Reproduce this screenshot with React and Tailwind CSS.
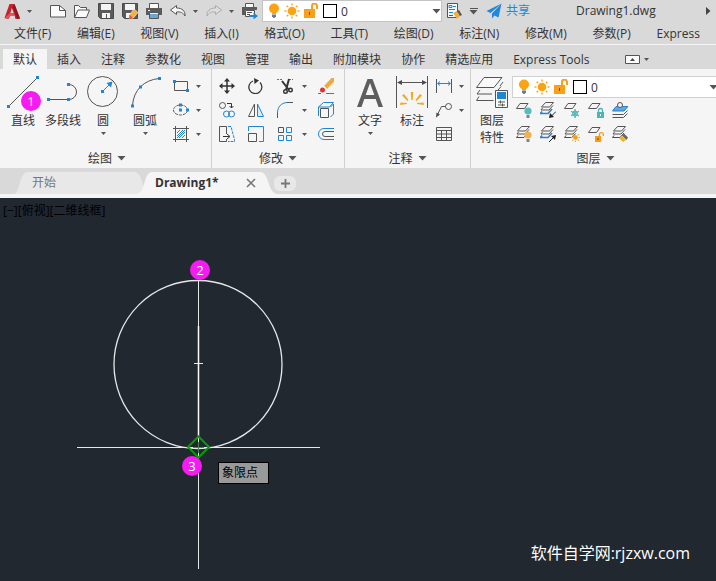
import React from "react";

const Svg = ({ w = 16, h = 16, children, className = "" }) => (
  <svg
    width={w}
    height={h}
    viewBox={`0 0 ${w} ${h}`}
    fill="none"
    stroke="#555"
    strokeWidth="1"
    className={`block shrink-0 ${className}`}
    aria-hidden="true"
  >
    {children}
  </svg>
);

const Caret = ({ big }) =>
  big ? (
    <Svg w={9} h={5}>
      <path d="M0.500 0h8L4.500 4.500z" fill="#555" stroke="none" />
    </Svg>
  ) : (
    <Svg w={5} h={3}>
      <path d="M0 0h5L2.500 3z" fill="#555" stroke="none" />
    </Svg>
  );

const Dot = ({ x, y }) => (
  <rect x={x - 1.5} y={y - 1.5} width="3" height="3" fill="#1f86d1" stroke="none" />
);

/* ---------- status glyphs ---------- */
const Bulb = () => (
  <Svg w={12} h={16}>
    <circle cx="6" cy="5.500" r="5" fill="#fca311" stroke="none" />
    <path d="M4 9h4v2H4z" fill="#fca311" stroke="none" />
    <path d="M4 11.500h4v2L6.500 15h-1L4 13.500z" fill="#6d7b88" stroke="none" />
  </Svg>
);
const rays = [0, 45, 90, 135, 180, 225, 270, 315];
const Sun = () => (
  <Svg>
    <circle cx="8" cy="8" r="4.300" fill="#fca311" stroke="none" />
    {rays.map((a) => (
      <path key={a} d="M8 0.500v2" stroke="#fca311" strokeWidth="1.400" transform={`rotate(${a} 8 8)`} />
    ))}
  </Svg>
);
const Unlock = () => (
  <Svg w={15}>
    <path d="M0 6h11v9H0z" fill="#f9a01b" stroke="none" />
    <path d="M8 7V3a2.500 2.500 0 0 1 5 0v3" stroke="#f9a01b" strokeWidth="2" />
    <path d="M5.500 9v3" stroke="#7a4d00" />
  </Svg>
);
const Swatch = () => <span className="block h-[14px] w-[14px] shrink-0 border border-black bg-white" />;

/* ---------- quick access icons ---------- */
const NewFile = () => (
  <Svg>
    <path d="M0.500 2.500h9l6 5v6.500H0.500z" fill="#fafafa" />
    <path d="M9.500 2.500v5h6" />
  </Svg>
);
const OpenFile = () => (
  <Svg>
    <path d="M0.500 14V2.500h4l2 2h6v2.500" fill="#fafafa" />
    <path d="M0.500 14.500l3.500-7.500h11.500l-3 7.500z" fill="#fafafa" />
  </Svg>
);
const Save = ({ edit }) => (
  <Svg>
    <path d="M0.500 0.500h15v15H2.500l-2-2z" fill="#5b5b5b" stroke="#4a4a4a" />
    <path d="M3 1h10v6H3z" fill="#f4f4f4" stroke="none" />
    <path d="M4 10h8v5H4z" fill="#f4f4f4" stroke="none" />
    <path d="M8.500 11v4" />
    {edit && (
      <>
        <path d="M7 12.500l5-6.500 4 3.500-5 6-3.500 0.500z" fill="#f5b042" stroke="#f4f4f4" strokeWidth="0.600" />
        <path d="M7.500 11.500l3.500 3.500-1 1H7z" fill="#e2574c" stroke="none" />
      </>
    )}
  </Svg>
);
const Printer = () => (
  <Svg>
    <path d="M3.500 5V0.500h9V5" fill="#fafafa" />
    <path d="M0 5h16v7H0z" fill="#5b5b5b" stroke="none" />
    <path d="M2 7.500h2" stroke="#fff" />
    <path d="M3.500 9.500h9v6h-9z" fill="#e6f1fa" />
    <path d="M4 11h8v4H4z" fill="#69a7d8" stroke="none" />
  </Svg>
);
const Undo = () => (
  <Svg>
    <path d="M6.500 2.500L0.500 7l6 4.500V9c4 -0.500 6.500 0.500 8.500 4 0.500-5-3-8-8.500-8z" fill="#f7f7f7" />
  </Svg>
);
const Redo = () => (
  <Svg>
    <path d="M9.500 2.500L15.500 7l-6 4.500V9C5.500 8.500 3 9.500 1 13 0.500 8 4 5 9.500 5z" fill="#dedede" stroke="#aaa" />
  </Svg>
);
const Plot = () => (
  <Svg>
    <path d="M3.500 5V0.500h8V5" fill="#fafafa" />
    <path d="M0 4h15v3H0zM0 7h3v5H0z" fill="#5b5b5b" stroke="none" />
    <path d="M3.500 7.500h9v6h-9z" fill="#fafafa" />
    <path d="M5 9.500h5M5 11.500h3" />
    <path d="M7 12h4.500V9.500l4.500 3.500-4.500 3.500V14H7z" fill="#1f86d1" stroke="none" />
  </Svg>
);
const MatchLayer = () => (
  <Svg>
    <path d="M1.500 0.500h10v14h-10z" fill="#f7f7f7" />
    <path d="M3 2.500h3v2H3zM7 3.500h3M3 6.500h6M3 9.500h4" stroke="#1f86d1" />
    <path d="M3 12.500h4" />
    <path d="M7 10l4-2 3 5-3 3z" fill="#f2ae3a" stroke="none" />
    <path d="M11 8l2-1 3 5-2 1z" fill="#555" stroke="none" />
  </Svg>
);
const Plane = () => (
  <Svg>
    <path d="M15.500 0.500L0.500 8l4 2zM15.500 0.500L6 10.500V15.500l2.500-3 4 2z" fill="#1c88e0" stroke="none" />
  </Svg>
);
const Logo = () => (
  <Svg w={17} h={17}>
    <path d="M5.500 1h5L16 15.500l-4.500 0.500-1-3.500H6l-1.500 3.500L0.500 15z" fill="#c4232d" stroke="none" />
    <path d="M10.500 1L16 15.500l-3 0.500L8.500 4z" fill="#8f1820" stroke="none" />
    <path d="M7.800 5L9.800 10H6.300z" fill="#d9d9d9" stroke="none" />
    <path d="M0.500 15L6 10h4l0.800 2.500H6.500L4.500 16z" fill="#e0525a" stroke="none" />
  </Svg>
);

/* ---------- large ribbon icons ---------- */
const LineIcon = () => (
  <Svg w={32} h={32}>
    <path d="M1.500 30.500L30.500 1.500" />
    <Dot x={1.5} y={30.5} />
    <Dot x={30.5} y={1.5} />
  </Svg>
);
const PolyIcon = () => (
  <Svg w={32} h={32}>
    <path d="M2 23.500h20a7.500 7.500 0 0 0 0-15" />
    <Dot x={1.5} y={23.5} />
    <Dot x={21.5} y={23.5} />
    <Dot x={21.5} y={8.5} />
  </Svg>
);
const CircleIcon = () => (
  <Svg w={32} h={32}>
    <circle cx="15.500" cy="15.500" r="15" />
    <path d="M15.500 15.500l7-7" stroke="#1f86d1" />
    <path d="M25.500 5.500l-1.500 6-4.500-4.500z" fill="#1f86d1" stroke="none" />
    <Dot x={15.5} y={15.5} />
  </Svg>
);
const ArcIcon = () => (
  <Svg w={32} h={32}>
    <path d="M3.500 29.500C4.500 14 15 4 30 2.500" />
    <Dot x={3.5} y={30} />
    <Dot x={11.5} y={11} />
    <Dot x={30.5} y={2.5} />
  </Svg>
);
const TextIcon = () => (
  <Svg w={32} h={32}>
    <path d="M3 31L13.500 3h5L29 31h-4.500l-2.800-8H10.300L7.500 31zM11.700 19h8.600L16 7z" fill="#5e5e5e" fillRule="evenodd" stroke="none" />
  </Svg>
);
const DimIcon = () => (
  <Svg w={32} h={32}>
    <path d="M0.500 0v32M31.500 0v32M2 6.500h28" />
    <path d="M1 6.500l5-2.500v5zM31 6.500l-5-2.500v5z" fill="#4a4a4a" stroke="none" />
    <path d="M14.700 16h2.600l-0.600 8h-1.400zM6 19.500l2-1.500 4.500 6-1 1zM26 19.500l-2-1.500-4.500 6 1 1zM4 29l0.500-2.500 6.500 0.500v1zM28 29l-0.500-2.500-6.500 0.500v1z" fill="#f5a81c" stroke="none" />
  </Svg>
);
const LayerPropIcon = () => (
  <Svg w={32} h={32}>
    <path d="M8 1.500h18L18 11.500H0.500z" fill="#fafafa" />
    <path d="M4 14l-3 4h15M25 10.500l-5 6M3 20.500L0.500 24.500h17M27 6l-3 4" />
    <path d="M19.500 14.500h12v17h-12z" fill="#fafafa" />
    <path d="M21 16h9v7h-9z" fill="#1f86d1" stroke="none" />
    <path d="M22 26h7M22 29h7M24.500 24.500v3M26.500 27.500v3" />
  </Svg>
);

/* ---------- small ribbon icons ---------- */
const RectIcon = () => (
  <Svg>
    <path d="M1.500 3.500h13v9h-13z" />
    <Dot x={1.5} y={3.5} />
    <Dot x={14.5} y={12.5} />
  </Svg>
);
const EllipseIcon = () => (
  <Svg>
    <ellipse cx="7.500" cy="8" rx="7" ry="5" strokeDasharray="3 1" />
    <Dot x={7.5} y={3} />
    <Dot x={7.5} y={8} />
    <Dot x={14.5} y={8} />
  </Svg>
);
const HatchIcon = () => (
  <Svg>
    <path d="M2.500 0v16M13.500 0v16M0 2.500h16M0 13.500h16" />
    <path d="M4 7l3-3M4 10l6-6M4 12l8-8M6 12l6-6M9 12l3-3" stroke="#1f86d1" />
  </Svg>
);
const MoveIcon = () => (
  <Svg>
    <path d="M8 2v12M2 8h12" stroke="#333" strokeWidth="1.500" />
    <path d="M8 0l3 3.500H5zM8 16l3-3.500H5zM0 8l3.500-3v6zM16 8l-3.500-3v6z" fill="#333" stroke="none" />
  </Svg>
);
const RotateIcon = () => (
  <Svg>
    <path d="M5 3a6.500 6.500 0 1 0 7 1.500" stroke="#333" strokeWidth="1.300" />
    <path d="M6 0l5 2.500L6.500 6z" fill="#333" stroke="none" />
  </Svg>
);
const TrimIcon = () => (
  <Svg w={18}>
    <path d="M0 1.500h6M12 1.500h4" stroke="#1f86d1" strokeDasharray="2 1" />
    <path d="M5 3l7 9M12 1L9 12" stroke="#333" strokeWidth="2" />
    <circle cx="8.500" cy="13.500" r="1.800" stroke="#333" strokeWidth="1.400" />
    <circle cx="13.500" cy="12" r="1.800" stroke="#333" strokeWidth="1.400" />
  </Svg>
);
const EraseIcon = () => (
  <Svg>
    <path d="M6 8L13.500 0H16v3.500L9 11z" fill="#f5a83a" stroke="none" />
    <path d="M6 8l3 3-1 1-3-3z" fill="#fff" stroke="none" />
    <circle cx="4.500" cy="12" r="2.500" fill="#d9343c" stroke="none" />
    <path d="M0 15.500h3M8 15.500h8" stroke="#1f86d1" />
  </Svg>
);
const CopyIcon = () => (
  <Svg>
    <circle cx="3.500" cy="3.500" r="3" />
    <path d="M8 1.500h4.500V6M10.500 4l2 2 2-2" stroke="#333" />
    <circle cx="7.500" cy="12" r="3" stroke="#1f86d1" />
    <circle cx="12.500" cy="12" r="3" stroke="#1f86d1" />
  </Svg>
);
const MirrorIcon = () => (
  <Svg>
    <path d="M6.500 2v12.500h-6z" />
    <path d="M9.500 2v12.500h6z" stroke="#1f86d1" fill="#d9ecfa" />
  </Svg>
);
const FilletIcon = () => (
  <Svg w={18}>
    <path d="M0.500 16v-5M10 0.500h6" />
    <path d="M0.500 11C0.500 5 4 1 10 0.500" stroke="#1f86d1" />
  </Svg>
);
const ExplodeIcon = () => (
  <Svg>
    <path d="M2.500 6.500h8v9h-8z" />
    <path d="M0.500 5l5-4.500h10l-4 4.500zM12.500 15l3-3V2l-3 3" stroke="#1f86d1" />
    <path d="M0.500 5v9" stroke="#1f86d1" />
  </Svg>
);
const StretchIcon = () => (
  <Svg>
    <path d="M7.500 8V0.500h-7v15h7V13" />
    <path d="M4 10.500h6M8 8l3 2.500L8 13" stroke="#333" />
    <path d="M9 0.500h3l4 15H9" stroke="#1f86d1" strokeDasharray="3 1" />
  </Svg>
);
const ScaleIcon = () => (
  <Svg>
    <path d="M0.500 5V0.500h15v15H11" stroke="#1f86d1" />
    <path d="M0.500 7.500h8v8h-8z" />
  </Svg>
);
const ArrayIcon = () => (
  <Svg w={18}>
    <path d="M1.500 1.500h5v5h-5z" />
    <path d="M9.500 1.500h5v5h-5zM1.500 9.500h5v5h-5zM9.500 9.500h5v5h-5z" stroke="#1f86d1" />
  </Svg>
);
const OffsetIcon = () => (
  <Svg>
    <path d="M16 2.500H6a5.500 5.500 0 0 0 0 11h10" stroke="#1f86d1" />
    <path d="M16 5.500H7a2.500 2.500 0 0 0 0 5h9" />
  </Svg>
);
const LinearIcon = () => (
  <Svg>
    <path d="M0.500 1v14M15.500 1v14" />
    <path d="M2 5.500h12M4 3.500l-2.500 2 2.500 2M12 3.500l2.500 2-2.500 2" stroke="#1f86d1" />
  </Svg>
);
const LeaderIcon = () => (
  <Svg>
    <circle cx="12.500" cy="4.500" r="3" />
    <path d="M9.500 4.500h-4l-4 8" />
    <path d="M0 15.500l0.500-5 3.500 2z" fill="#4a4a4a" stroke="none" />
  </Svg>
);
const TableIcon = () => (
  <Svg>
    <path d="M0.500 1.500h15v13H0.500zM0.500 4.500h15M0.500 8h15M0.500 11.500h15M5.500 4.500v10M10.500 4.500v10" />
  </Svg>
);

/* ---------- layer tools ---------- */
const Sheet = () => <path d="M4 1.500h8L8.500 6.500H0.500z" />;
const Stack = ({ blue }) => (
  <>
    <path d="M5.500 0.500h8l-4 4.500h-8z" />
    <path d="M2.500 6l-1.500 2h8l4-4.500" />
    <path d="M2 9.500L0.500 11.500h7.500l4-4.500" stroke={blue ? "#2d7fc8" : "#4a4a4a"} strokeWidth={blue ? 1.6 : 1} />
  </>
);
const MiniBulb = ({ c }) => (
  <>
    <circle cx="12" cy="9" r="3.600" fill={c} stroke="none" />
    <path d="M10.500 13h3v3h-3z" fill="#7b858e" stroke="none" />
  </>
);
const layerTools = [
  ["关闭", <><Sheet /><MiniBulb c="#55bcc0" /></>],
  ["隔离", <><Stack blue /><path d="M16 9.500l-5 5" stroke="#222" /><path d="M9 16l1-5 4 4z" fill="#222" stroke="none" /></>],
  ["冻结", <><Sheet /><circle cx="11" cy="11.500" r="2.500" stroke="#4bb5b9" />{[0, 60, 120].map((a) => <path key={a} d="M11 7v9" stroke="#4bb5b9" strokeWidth="1.400" transform={`rotate(${a} 11 11.500)`} />)}</>],
  ["锁定", <><Sheet /><path d="M9 10h7v6H9z" fill="#4bb5b9" stroke="none" /><path d="M10.500 10V8.500a2 2 0 0 1 4 0V10" stroke="#4bb5b9" strokeWidth="1.300" /><path d="M12.500 12v2" stroke="#fff" /></>],
  ["置为当前", <><path d="M4 4.500h12l-4 4.500H0.500z" fill="#5da9e2" stroke="#2d7fc8" /><circle cx="8" cy="3" r="2.500" fill="#f5f5f5" /><path d="M0.500 12.500h11l4-4M0.500 15.500h11l4-4" /></>],
  ["打开所有", <><Stack /><MiniBulb c="#f4b04a" /></>],
  ["取消隔离", <><Stack blue /><path d="M9 16l5-5" stroke="#222" /><path d="M16 9l-1 5-4-4z" fill="#222" stroke="none" /></>],
  ["解冻", <><Stack /><circle cx="11.500" cy="11.500" r="2.300" fill="#f59d16" stroke="none" />{rays.map((a) => <path key={a} d="M11.500 7v1.400" stroke="#f59d16" transform={`rotate(${a} 11.500 11.500)`} />)}</>],
  ["解锁", <><Sheet /><path d="M7 10h6v6H7z" fill="#f59d16" stroke="none" /><path d="M11.500 10V8.500a1.900 1.900 0 0 1 3.800 0v1.500" stroke="#f59d16" strokeWidth="1.300" /><path d="M10 12v2" stroke="#7a4d00" /></>],
  ["匹配图层", <><Stack /><path d="M7 12l3-2 4 4-3 2z" fill="#f2b21c" stroke="none" /><path d="M10 9.500l2-2 4 4-1.500 2.500z" fill="#666" stroke="none" /></>],
];

/* ---------- building blocks ---------- */
const IconButton = ({ label, children, className = "" }) => (
  <button type="button" aria-label={label} className={`flex shrink-0 items-center justify-center ${className}`}>
    {children}
  </button>
);

const BigTool = ({ label, icon, caret, width = "w-10" }) => (
  <button type="button" className={`flex shrink-0 flex-col items-center ${width}`}>
    {icon}
    <span className="mt-1 block leading-[17px]">{label}</span>
    {caret && (
      <span className="mt-[3px]">
        <Caret />
      </span>
    )}
  </button>
);

const SmallTool = ({ label, icon, caret }) => (
  <button type="button" aria-label={label} className="flex h-6 items-center gap-[7px]">
    {icon}
    {caret && <Caret />}
  </button>
);

const Panel = ({ title, children, className = "" }) => (
  <section className={`flex flex-col border-r border-[#d0d0d0] ${className}`}>
    <div className="flex h-[78px] pt-[7px]">{children}</div>
    <button type="button" className="mt-[3px] flex h-[17px] items-center justify-center gap-[5px] self-center">
      {title}
      <Caret big />
    </button>
  </section>
);

const LayerSelect = ({ className = "" }) => (
  <div className={`flex items-center gap-[4px] bg-white pl-[5px] ${className}`}>
    <Bulb />
    <Sun />
    <Unlock />
    <Swatch />
    <select aria-label="图层" className="h-full min-w-0 flex-1 appearance-none bg-transparent leading-[19px] outline-none">
      <option>0</option>
    </select>
    <Caret big />
  </div>
);

const Badge = ({ n, className }) => (
  <span
    className={`absolute flex h-5 w-5 items-center justify-center rounded-full bg-[#f61bf2] text-[13px] leading-5 text-white ${className}`}
  >
    {n}
  </span>
);

const menus = ["文件(F)", "编辑(E)", "视图(V)", "插入(I)", "格式(O)", "工具(T)", "绘图(D)", "标注(N)", "修改(M)", "参数(P)", "Express"];
const tabs = ["默认", "插入", "注释", "参数化", "视图", "管理", "输出", "附加模块", "协作", "精选应用", "Express Tools"];

export default function App() {
  return (
    <div className="flex min-h-screen flex-col overflow-hidden whitespace-nowrap bg-[#d9d9d9] font-['Open_Sans','Noto_Sans_CJK_SC',sans-serif] text-[12px] text-[#333]">
      <header>
        <div className="flex h-[22px] items-center">
          <IconButton label="应用程序菜单" className="ml-1 gap-[6px]">
            <Logo />
            <Caret />
          </IconButton>
          <div className="ml-[18px] flex items-center gap-2">
            <IconButton label="新建"><NewFile /></IconButton>
            <IconButton label="打开"><OpenFile /></IconButton>
            <IconButton label="保存"><Save /></IconButton>
            <IconButton label="另存为"><Save edit /></IconButton>
            <IconButton label="打印"><Printer /></IconButton>
            <IconButton label="放弃" className="gap-[7px]"><Undo /><Caret /></IconButton>
            <IconButton label="重做" className="gap-[7px]"><Redo /><Caret /></IconButton>
            <IconButton label="批处理打印"><Plot /></IconButton>
          </div>
          <LayerSelect className="ml-1 h-[22px] w-[180px] shrink-0 border border-[#c4c4c4]" />
          <IconButton label="匹配" className="ml-1"><MatchLayer /></IconButton>
          <IconButton label="自定义快速访问工具栏" className="ml-[7px] flex-col gap-px">
            <span className="block h-px w-2 bg-[#555]" />
            <Caret big />
          </IconButton>
          <button type="button" className="ml-2 flex items-center gap-1 text-[#1c88e0]">
            <Plane />
            共享
          </button>
          <h1 className="ml-[46px] text-[12px]">Drawing1.dwg</h1>
          <IconButton label="展开" className="ml-auto mr-[5px]">
            <Svg w={5} h={8}>
              <path d="M0 0l4.500 4L0 8z" fill="#444" stroke="none" />
            </Svg>
          </IconButton>
        </div>
        <nav aria-label="菜单栏" className="flex h-[22px] max-w-[700px] items-end justify-between pl-[14px]">
          {menus.map((m) => (
            <button type="button" key={m} className="shrink-0 leading-5">
              {m}
            </button>
          ))}
        </nav>
      </header>

      <nav aria-label="功能区选项卡" className="flex h-[25px] items-end border-t border-[#f4f4f4] pl-[3px]">
        {tabs.map((t, i) => (
          <button type="button" key={t} className={`h-5 shrink-0 px-[10px] pt-px leading-5 ${i === 0 ? "bg-[#f5f5f5]" : ""}`}>
            {t}
          </button>
        ))}
        <button type="button" aria-label="最小化功能区" className="ml-[26px] flex h-5 items-center gap-1">
          <Svg w={15} h={9}>
            <path d="M0.500 0.500h14v8H0.500z" fill="#fafafa" />
            <path d="M5 6l2.500-3L10 6z" fill="#444" stroke="none" />
          </Svg>
          <Caret />
        </button>
      </nav>

      <main className="flex flex-1 flex-col">
        <div className="flex h-[99px] bg-[#f5f5f5]">
          <Panel title="绘图" className="w-[212px] shrink-0 pl-[3px]">
            <div className="relative">
              <BigTool label="直线" icon={<LineIcon />} />
              <Badge n="1" className="left-[18px] top-[15px]" />
            </div>
            <BigTool label="多段线" icon={<PolyIcon />} />
            <BigTool label="圆" icon={<CircleIcon />} caret />
            <BigTool label="圆弧" icon={<ArcIcon />} caret width="w-11" />
            <div className="-mt-[2px] ml-[6px]">
              <SmallTool label="矩形" icon={<RectIcon />} caret />
              <SmallTool label="椭圆" icon={<EllipseIcon />} caret />
              <SmallTool label="图案填充" icon={<HatchIcon />} caret />
            </div>
          </Panel>

          <Panel title="修改" className="w-[133px] shrink-0">
            <div className="-mt-[2px] ml-[7px] grid grid-cols-[29px_29px_41px_16px] content-start">
              <SmallTool label="移动" icon={<MoveIcon />} />
              <SmallTool label="旋转" icon={<RotateIcon />} />
              <SmallTool label="修剪" icon={<TrimIcon />} caret />
              <SmallTool label="删除" icon={<EraseIcon />} />
              <SmallTool label="复制" icon={<CopyIcon />} />
              <SmallTool label="镜像" icon={<MirrorIcon />} />
              <SmallTool label="圆角" icon={<FilletIcon />} caret />
              <SmallTool label="分解" icon={<ExplodeIcon />} />
              <SmallTool label="拉伸" icon={<StretchIcon />} />
              <SmallTool label="缩放" icon={<ScaleIcon />} />
              <SmallTool label="阵列" icon={<ArrayIcon />} caret />
              <SmallTool label="偏移" icon={<OffsetIcon />} />
            </div>
          </Panel>

          <Panel title="注释" className="w-[126px] shrink-0">
            <div className="ml-[5px] flex">
              <BigTool label="文字" icon={<TextIcon />} caret />
              <BigTool label="标注" icon={<DimIcon />} width="w-11" />
            </div>
            <div className="-mt-[2px] ml-[2px]">
              <SmallTool label="线性" icon={<LinearIcon />} caret />
              <SmallTool label="引线" icon={<LeaderIcon />} caret />
              <SmallTool label="表格" icon={<TableIcon />} />
            </div>
          </Panel>

          <Panel title="图层" className="min-w-0 flex-1 border-r-0 pl-1">
            <BigTool label={<>图层<br />特性</>} icon={<LayerPropIcon />} width="w-[34px]" />
            <div className="ml-[3px] min-w-0 flex-1">
              <LayerSelect className="-mr-[2px] h-[22px] border border-r-0 border-[#d0d0d0]" />
              <div className="ml-1 grid grid-cols-[24px_24px_24px_24px_24px]">
                {layerTools.map(([name, art]) => (
                  <SmallTool key={name} label={name} icon={<Svg>{art}</Svg>} />
                ))}
              </div>
            </div>
          </Panel>
        </div>

        <div className="flex h-[30px] items-start border-b-4 border-[#f5f5f5] bg-[#d8d9d8] pl-[14px] pt-1">
          <button type="button" className="relative h-[22px] w-[134px] shrink-0 pl-[18px] text-left text-[#777]">
            <svg className="absolute inset-0 h-full w-full" viewBox="0 0 134 22" preserveAspectRatio="none" aria-hidden="true">
              <path d="M0 22C6 22 5 0 14 0H120C130 0 128 22 134 22z" fill="#e8e8e8" />
            </svg>
            <span className="relative">开始</span>
          </button>
          <div className="relative -ml-3 flex h-[22px] w-[142px] shrink-0 items-center pl-[19px]">
            <svg className="absolute inset-0 h-full w-full" viewBox="0 0 142 22" preserveAspectRatio="none" aria-hidden="true">
              <path d="M0 22C10 22 7 0 16 0H124C134 0 131 22 142 22z" fill="#f5f5f5" />
            </svg>
            <button type="button" className="relative font-bold">
              Drawing1*
            </button>
            <button type="button" aria-label="关闭图形" className="relative ml-auto mr-[22px]">
              <Svg w={10} h={10}>
                <path d="M1 1l8 8M9 1l-8 8" stroke="#777" strokeWidth="1.600" />
              </Svg>
            </button>
          </div>
          <IconButton label="新图形" className="-ml-1 mt-1 h-[15px] w-[22px] rounded-md bg-[#e8e8e8]">
            <Svg w={9} h={9}>
              <path d="M4.500 0v9M0 4.500h9" stroke="#777" strokeWidth="1.800" />
            </Svg>
          </IconButton>
        </div>

        <section aria-label="绘图区" className="relative flex min-h-[383px] flex-1 flex-col justify-between bg-[#212830]">
          <p className="pl-[3px] pt-1 leading-[18px] text-black">[−][俯视][二维线框]</p>
          <svg width="330" height="383" viewBox="0 0 330 383" fill="none" stroke="#e6e8ea" className="absolute left-0 top-0" aria-hidden="true">
            <circle cx="198" cy="166.500" r="84" strokeWidth="1.300" />
            <path d="M198.500 83v288M77 249.500h243M194 165.500h9" />
            <path d="M198.500 128v110" stroke="#fff" strokeWidth="1.500" />
            <path d="M198.500 238.500l10.500 10.500-10.500 10.500L188 249z" stroke="#0a9a0a" strokeWidth="2" />
            <path d="M198.500 244v11M193 249.500h11" stroke="#3f8f4a" />
          </svg>
          <Badge n="2" className="left-[190px] top-[62px]" />
          <Badge n="3" className="left-[182px] top-[258px]" />
          <span role="tooltip" className="absolute left-[218px] top-[264px] h-[22px] w-[51px] border border-black bg-[#999] pl-[3px] leading-5 text-black">
            象限点
          </span>
          <p className="self-end pb-4 pr-[26px] text-[16px] leading-6 text-white">软件自学网:rjzxw.com</p>
        </section>
      </main>
    </div>
  );
}
